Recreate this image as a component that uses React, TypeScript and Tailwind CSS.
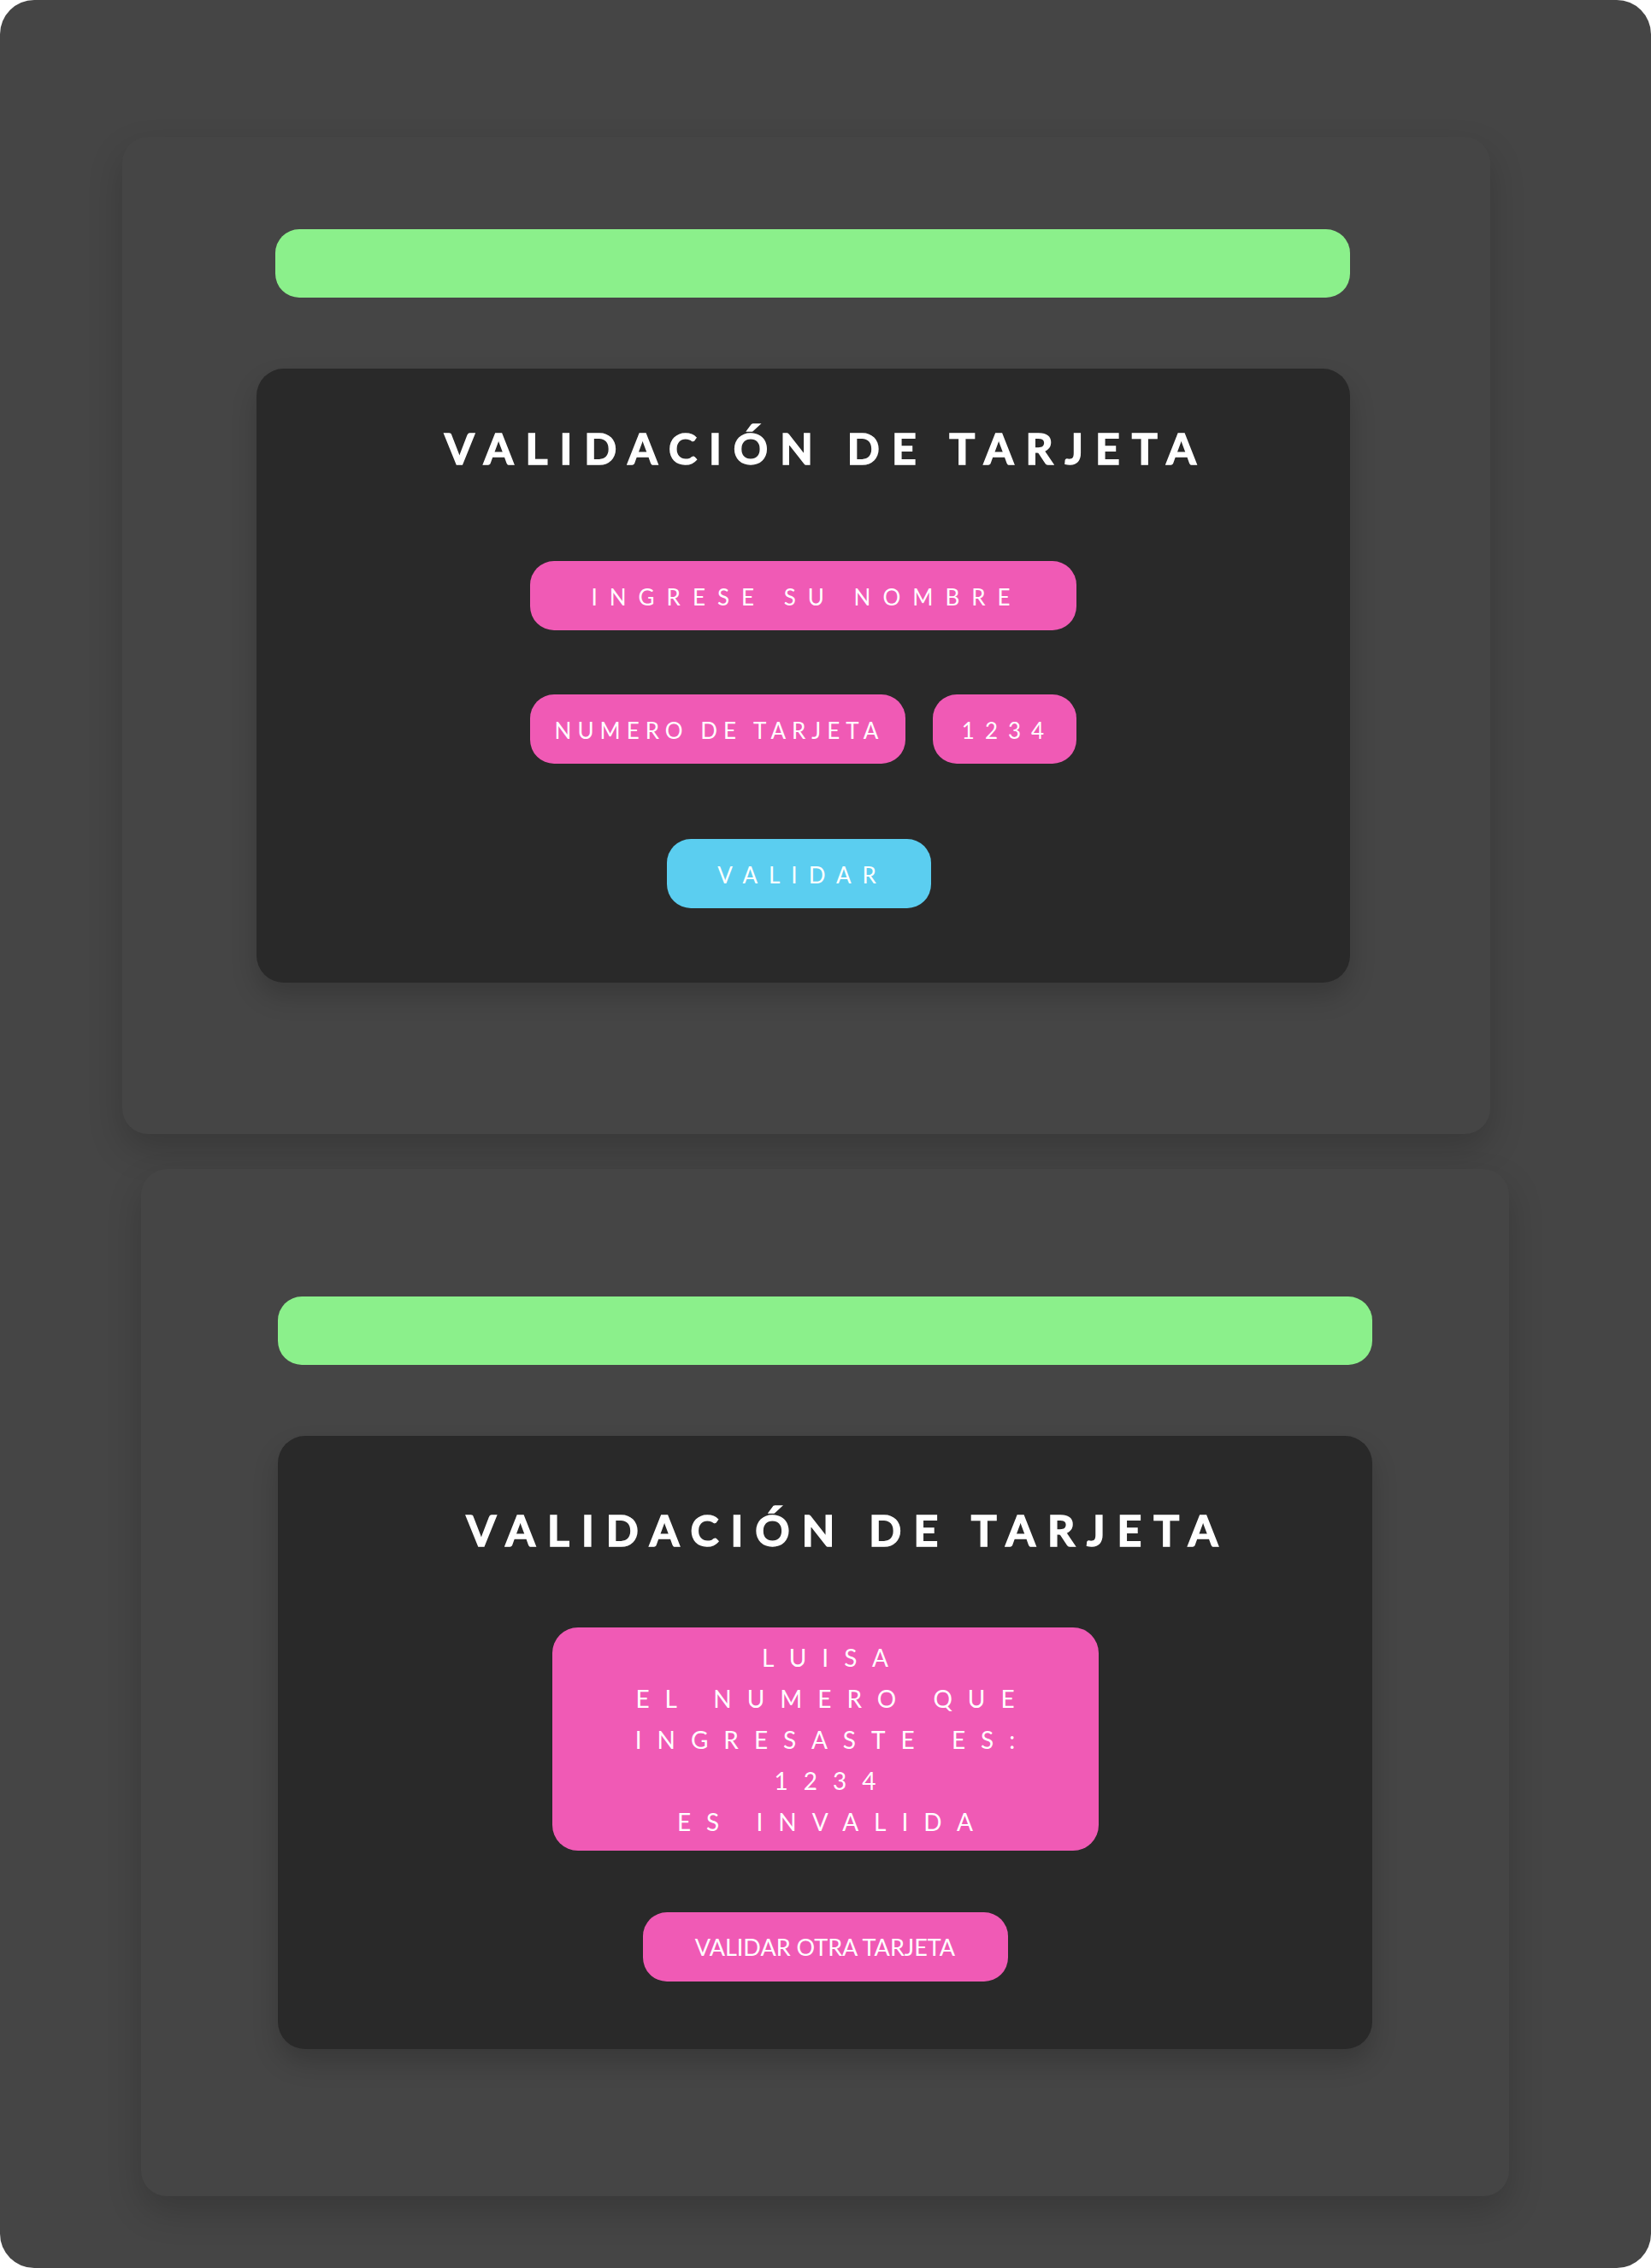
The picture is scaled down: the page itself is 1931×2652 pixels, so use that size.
import React from 'react';

const pill = 'flex items-center justify-center bg-[#f05ab5] text-white rounded-[28px] h-[81px] pt-[3px]';

function Titulo({ top }: { top: string }) {
    return (
        <h1 className={`${top} pl-[54px] text-center text-white font-bold text-[50px] leading-[50px] tracking-[14px] [-webkit-text-stroke:1.5px_white]`}>
            VALIDACIÓN DE TARJETA
        </h1>
    );
}

function FormPanel() {
    return (
        <div className="ml-[143px] w-[1600px] h-[1166px] rounded-[30px] bg-[#454545] shadow-[0_18px_40px_rgba(0,0,0,0.18)] flex flex-col">
            <div className="mt-[108px] ml-[179px] mr-[164px] h-[80px] rounded-[28px] bg-[#8bf08b]" />
            <div className="mt-[83px] ml-[157px] mr-[164px] h-[718px] rounded-[32px] bg-[#292929] shadow-[0_16px_30px_rgba(0,0,0,0.18)] flex flex-col items-center">
                <Titulo top="mt-[68px]" />

                <div className={`${pill} mt-[107px] w-[639px] pl-[8px] text-[26px] tracking-[14px]`}>
                    INGRESE SU NOMBRE
                </div>

                <div className="mt-[75px] flex gap-[32px]">
                    <div className={`${pill} w-[439px] pl-[4px] text-[26px] tracking-[7px]`}>NUMERO DE TARJETA</div>
                    <div className={`${pill} w-[168px] pl-[8px] text-[26px] tracking-[12px]`}>1234</div>
                </div>

                <button className="mt-[88px] -ml-[10px] w-[309px] h-[81px] pt-[3px] pl-[8px] rounded-[28px] bg-[#5bcef0] text-white text-[26px] tracking-[13px] flex items-center justify-center">
                    VALIDAR
                </button>
            </div>
        </div>
    );
}

function ResultPanel() {
    const lineas = ['LUISA', 'EL NUMERO QUE', 'INGRESASTE ES:', '1234', 'ES INVALIDA'];
    return (
        <div className="ml-[165px] w-[1600px] h-[1201px] rounded-[30px] bg-[#454545] shadow-[0_18px_40px_rgba(0,0,0,0.18)] flex flex-col">
            <div className="mt-[149px] mx-[160px] h-[80px] rounded-[28px] bg-[#8bf08b]" />
            <div className="mt-[83px] mx-[160px] h-[717px] rounded-[32px] bg-[#292929] shadow-[0_16px_30px_rgba(0,0,0,0.18)] flex flex-col items-center">
                <Titulo top="mt-[85px]" />

                {/* mensaje */}
                <div className="mt-[89px] w-[639px] h-[261px] rounded-[30px] bg-[#f05ab5] text-white text-[28px] leading-[48px] tracking-[18px] text-center pt-[11px] pl-[18px]">
                    {lineas.map((l) => (
                        <div key={l}>{l}</div>
                    ))}
                </div>

                <button className="mt-[72px] w-[427px] h-[81px] pt-[2px] rounded-[28px] bg-[#f05ab5] text-white text-[27px] flex items-center justify-center">
                    VALIDAR OTRA TARJETA
                </button>
            </div>
        </div>
    );
}

export default function App() {
    return (
        <div className="w-[1931px] h-[2652px] bg-white font-['Lato',sans-serif]">
            <div className="w-full h-full rounded-[40px] bg-[#454545] pt-[160px] flex flex-col gap-[41px]">
                <FormPanel />
                <ResultPanel />
            </div>
        </div>
    );
}
